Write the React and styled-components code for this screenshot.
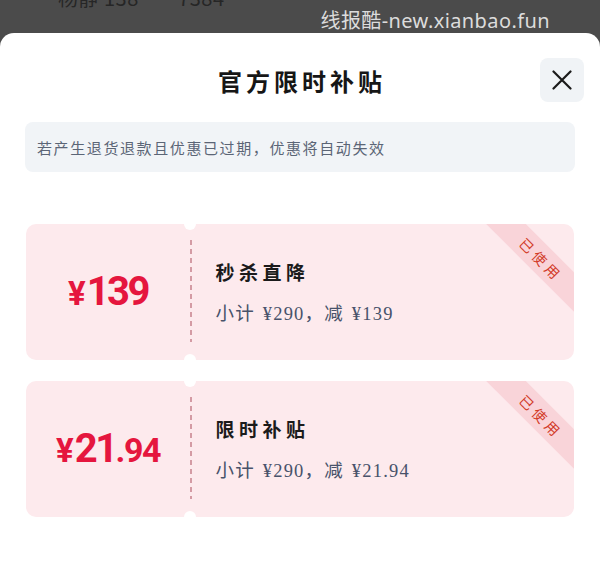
import React from 'react';
import styled, { createGlobalStyle } from "styled-components";

const GlobalStyle = createGlobalStyle`
  html, body {
    margin: 0;
    padding: 0;
    background: #4b4b4b;
  }
  * {
    box-sizing: border-box;
  }
`;

const coupons = [
    { id: 1, int: "139", dec: "", title: "秒杀直降", total: "290", cut: "139" },
    { id: 2, int: "21", dec: ".94", title: "限时补贴", total: "290", cut: "21.94" }
];

function App()
{
    return (
        <Page>
            <GlobalStyle />
            <TopBar>
                <BehindText>杨静 138****7384</BehindText>
                <Watermark>线报酷-new.xianbao.fun</Watermark>
            </TopBar>

            <Sheet>
                <Header>
                    <Title>官方限时补贴</Title>
                    <CloseButton type="button" aria-label="关闭">
                        <svg width="20" height="20" viewBox="0 0 20 20" fill="none">
                            <path d="M1.5 1.5 L18.5 18.5 M18.5 1.5 L1.5 18.5" stroke="#1a1a1a" strokeWidth="2.2" strokeLinecap="round" />
                        </svg>
                    </CloseButton>
                </Header>

                <Notice>若产生退货退款且优惠已过期，优惠将自动失效</Notice>

                <CouponList>
                    {coupons.map((c) => (
                        <Coupon key={c.id}>
                            <Amount>
                                <Yen>¥</Yen>
                                <Big>{c.int}</Big>
                                {c.dec && <Small>{c.dec}</Small>}
                            </Amount>
                            <Divider />
                            <Info>
                                <CouponTitle>{c.title}</CouponTitle>
                                <CouponSub>小计 ¥{c.total}，减 ¥{c.cut}</CouponSub>
                            </Info>
                            <Notch $top />
                            <Notch />
                            <Ribbon>已使用</Ribbon>
                        </Coupon>
                    ))}
                </CouponList>
            </Sheet>
        </Page>
    );
};

const Page = styled.div`
  width: 600px;
  height: 570px;
  overflow: hidden;
  display: flex;
  flex-direction: column;
  background: #4b4b4b;
  font-family: "Noto Sans CJK SC", "Noto Sans", sans-serif;
`;

const TopBar = styled.div`
  position: relative;
  height: 33px;
  flex-shrink: 0;
  overflow: hidden;
  display: flex;
  align-items: flex-end;
  justify-content: flex-end;
  padding: 0 50px 0 0;
`;

const BehindText = styled.div`
  position: absolute;
  left: 58px;
  top: -14px;
  font-size: 20px;
  line-height: 24px;
  color: #262626;
  letter-spacing: 0.5px;
`;

const Watermark = styled.div`
  font-family: "Noto Sans", "Noto Sans CJK SC", sans-serif;
  font-size: 20px;
  line-height: 24px;
  letter-spacing: 0.4px;
  color: #dcdcdc;
`;

const Sheet = styled.div`
  flex: 1;
  background: #ffffff;
  border-radius: 14px 14px 0 0;
  padding: 25px 25px 0 25px;
  display: flex;
  flex-direction: column;
`;

const Header = styled.div`
  position: relative;
  height: 44px;
  display: flex;
  align-items: center;
  justify-content: center;
`;

const Title = styled.h2`
  margin: 0;
  font-size: 24px;
  font-weight: 700;
  letter-spacing: 4px;
  color: #161616;
  padding-left: 4px;
`;

const CloseButton = styled.button`
  position: absolute;
  right: -9px;
  top: 0;
  width: 44px;
  height: 44px;
  border: none;
  border-radius: 8px;
  background: #f0f3f6;
  display: flex;
  align-items: center;
  justify-content: center;
  padding: 0;
`;

const Notice = styled.div`
  margin-top: 20px;
  height: 50px;
  border-radius: 8px;
  background: #f1f4f7;
  display: flex;
  align-items: center;
  padding: 0 12px;
  font-size: 15px;
  letter-spacing: 1.6px;
  color: #5b6576;
`;

const CouponList = styled.div`
  margin: 52px 1px 0 1px;
  display: flex;
  flex-direction: column;
  gap: 21px;
`;

const Coupon = styled.div`
  position: relative;
  height: 136px;
  border-radius: 10px;
  background: #fdeaed;
  display: flex;
  overflow: hidden;
`;

const Amount = styled.div`
  width: 164px;
  flex-shrink: 0;
  display: flex;
  align-items: baseline;
  justify-content: center;
  padding-top: 44px;
  color: #e5163e;
  font-family: "Roboto", "Liberation Sans", sans-serif;
  font-weight: 700;
`;

const Yen = styled.span`
  font-size: 33px;
  margin-right: 1px;
`;

const Big = styled.span`
  font-size: 40px;
  letter-spacing: -2.5px;
`;

const Small = styled.span`
  font-size: 34px;
  letter-spacing: -1.5px;
`;

const Divider = styled.div`
  width: 1.5px;
  margin: 16px 0 18px 0;
  background: repeating-linear-gradient(to bottom, #d49ba4 0 5px, transparent 5px 9px);
`;

const Info = styled.div`
  display: flex;
  flex-direction: column;
  padding: 36px 0 0 24px;
  gap: 18px;
`;

const CouponTitle = styled.div`
  font-size: 19px;
  line-height: 24px;
  font-weight: 700;
  letter-spacing: 4.5px;
  color: #1b1b1b;
`;

const CouponSub = styled.div`
  font-family: "Liberation Serif", "Noto Sans CJK SC", serif;
  font-size: 18.5px;
  line-height: 24px;
  color: #48526a;
  letter-spacing: 1.2px;
  word-spacing: 2px;
`;

const Notch = styled.span`
  position: absolute;
  left: 158px;
  ${(p) => (p.$top ? "top: -6px;" : "bottom: -6px;")}
  width: 12px;
  height: 12px;
  border-radius: 50%;
  background: #ffffff;
`;

const Ribbon = styled.div`
  position: absolute;
  right: -46px;
  top: 20px;
  width: 160px;
  height: 28px;
  transform: rotate(45deg);
  background: #f9d4d9;
  color: #d23a27;
  font-size: 14px;
  letter-spacing: 4px;
  display: flex;
  align-items: center;
  justify-content: center;
  padding-left: 4px;
`;

export default App;
